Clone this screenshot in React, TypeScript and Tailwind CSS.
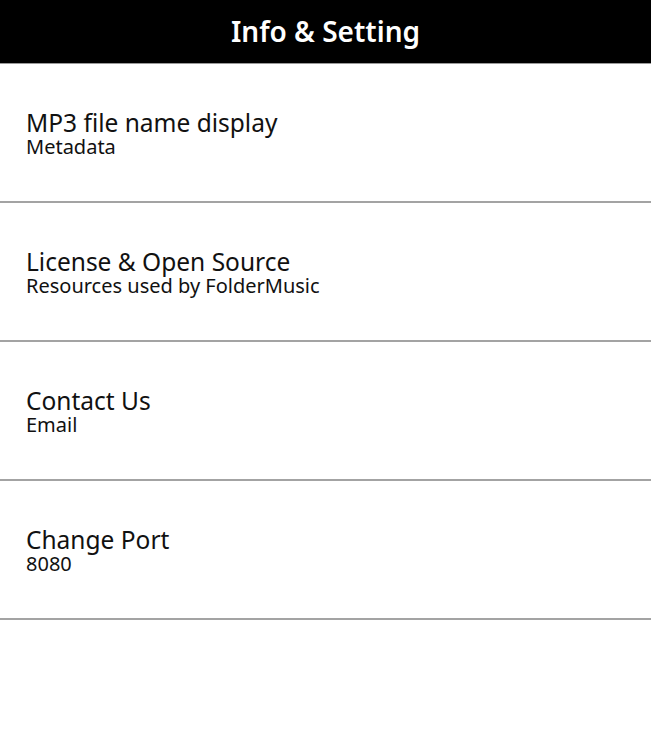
import React from "react";

const items = [
  { title: "MP3 file name display", sub: "Metadata" },
  { title: "License & Open Source", sub: "Resources used by FolderMusic" },
  { title: "Contact Us", sub: "Email" },
  { title: "Change Port", sub: "8080" },
];

export default function App() {
  return (
    <div
      className="w-[651px] h-[738px] bg-white"
      style={{ fontFamily: '"Noto Sans", "Open Sans", sans-serif' }}
    >
      <div className="h-[64px] bg-black border-b border-[#9a9a9a] flex items-center justify-center">
        <span className="text-white text-[28px] font-semibold leading-none pb-[2px]">Info &amp; Setting</span>
      </div>
      {items.map((it) => (
        <div
          key={it.title}
          className="h-[139px] border-b-2 border-[#a3a3a3] flex flex-col justify-center pl-[26px] pt-[3px]"
        >
          <div className="text-[24.5px] leading-[26px] text-[#111]">{it.title}</div>
          <div className="text-[20px] leading-[22px] text-[#111]">{it.sub}</div>
        </div>
      ))}
    </div>
  );
}
